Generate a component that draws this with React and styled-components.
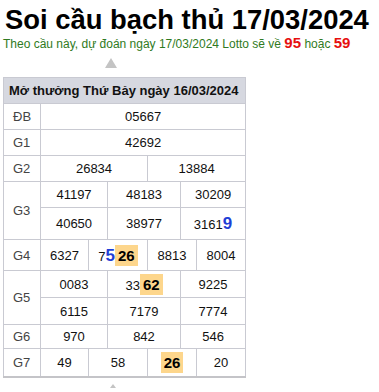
import styled, { createGlobalStyle } from 'styled-components';

const GlobalStyle = createGlobalStyle`
  body {
    margin: 0;
    background: #fff;
    font-family: "Liberation Sans", Arial, sans-serif;
  }
`;

const rows = [
  { label: 'ĐB', h: 26, cells: [[6, '05667']] },
  { label: 'G1', h: 26, cells: [[6, '42692']] },
  { label: 'G2', h: 26, cells: [[3, '26834'], [3, '13884']] },
  { label: 'G3', span: 2, h: 26, cells: [[2, '41197'], [2, '48183'], [2, '30209']] },
  { h: 32, cells: [[2, '40650'], [2, '38977'], [2, ['3161', { blue: '9' }]]] },
  {
    label: 'G4',
    h: 31,
    cells: [[1, '6327'], [2, ['7', { blue: '5' }, { mark: '26' }]], [2, '8813'], [1, '8004']],
  },
  { label: 'G5', span: 2, h: 27, cells: [[2, '0083'], [2, ['33', { mark: '62' }]], [2, '9225']] },
  { h: 27, cells: [[2, '6115'], [2, '7179'], [2, '7774']] },
  { label: 'G6', h: 24, cells: [[2, '970'], [2, '842'], [2, '546']] },
  { label: 'G7', h: 28, cells: [[1, '49'], [2, '58'], [2, [{ mark: '26' }]], [1, '20']] },
];

const colWidths = [37, 48, 19, 40, 33, 16, 49];

const renderValue = (v) => {
  if (typeof v === 'string') return v;
  return v.map((part, i) => {
    if (typeof part === 'string') return <span key={i}>{part}</span>;
    if (part.blue) return <Blue key={i}>{part.blue}</Blue>;
    return <Mark key={i}>{part.mark}</Mark>;
  });
};

const App = () => {
  return (
    <Page>
      <GlobalStyle />
      <Title>Soi cầu bạch thủ 17/03/2024</Title>
      <Subtitle>
        Theo cầu này, dự đoán ngày 17/03/2024 Lotto sẽ về <Hot>95</Hot> hoặc <Hot>59</Hot>
      </Subtitle>
      <Arrow />
      <ResultTable>
        <colgroup>
          {colWidths.map((w, i) => (
            <col key={i} style={{ width: w }} />
          ))}
        </colgroup>
        <thead>
          <tr>
            <HeadCell colSpan={7}>Mở thưởng Thứ Bảy ngày 16/03/2024</HeadCell>
          </tr>
        </thead>
        <tbody>
          {rows.map((row, r) => (
            <Row key={r} $h={row.h}>
              {row.label && <Label rowSpan={row.span || 1}>{row.label}</Label>}
              {row.cells.map(([span, value], c) => (
                <Cell key={c} colSpan={span}>
                  {renderValue(value)}
                </Cell>
              ))}
            </Row>
          ))}
        </tbody>
      </ResultTable>
      <Arrow $small />
    </Page>
  );
};
export default App;

const Page = styled.div`
  width: 379px;
  height: 392px;
  overflow: hidden;
`;

const Title = styled.h1`
  margin: 0;
  padding: 5px 0 0 5px;
  font-size: 27.4px;
  line-height: 30px;
  font-weight: bold;
  color: #000;
  white-space: nowrap;
`;

const Subtitle = styled.div`
  padding-left: 3px;
  font-size: 12px;
  line-height: 15px;
  color: #2f7a22;
  white-space: nowrap;
`;

const Hot = styled.b`
  color: #e60f0f;
  font-size: 15px;
`;

const Arrow = styled.div`
  width: 0;
  height: 0;
  margin: ${(p) => (p.$small ? '6px 0 0 110px' : '6px 0 9px 105px')};
  border-left: ${(p) => (p.$small ? '3px' : '6.5px')} solid transparent;
  border-right: ${(p) => (p.$small ? '3px' : '6.5px')} solid transparent;
  border-bottom: ${(p) => (p.$small ? '4px' : '10px')} solid #c4c4c4;
`;

const ResultTable = styled.table`
  margin: 0 0 0 3px;
  width: 242px;
  table-layout: fixed;
  border-collapse: collapse;
  border: 1px solid #c9cad2;
  border-bottom: 2px solid #c4c4c8;
  font-size: 13px;
  color: #111;
`;

const HeadCell = styled.th`
  height: 25px;
  padding: 0 5px;
  background: #d6d8e0;
  border: 1px solid #c9cad2;
  font-size: 13px;
  font-weight: bold;
  text-align: left;
  white-space: nowrap;
  color: #111;
`;

const Row = styled.tr`
  height: ${(p) => p.$h}px;
`;

const Label = styled.td`
  padding: 0 0 0 9px;
  border: 1px solid #c9cad2;
  color: #444;
  font-size: 13px;
`;

const Cell = styled.td`
  padding: 0;
  border: 1px solid #c9cad2;
  text-align: center;
  white-space: nowrap;
`;

const Blue = styled.b`
  color: #1f3fd6;
  font-size: 17px;
`;

const Mark = styled.b`
  display: inline-block;
  padding: 1px 3px;
  background: #fdd68c;
  color: #000;
  font-size: 15px;
  line-height: 19px;
`;
